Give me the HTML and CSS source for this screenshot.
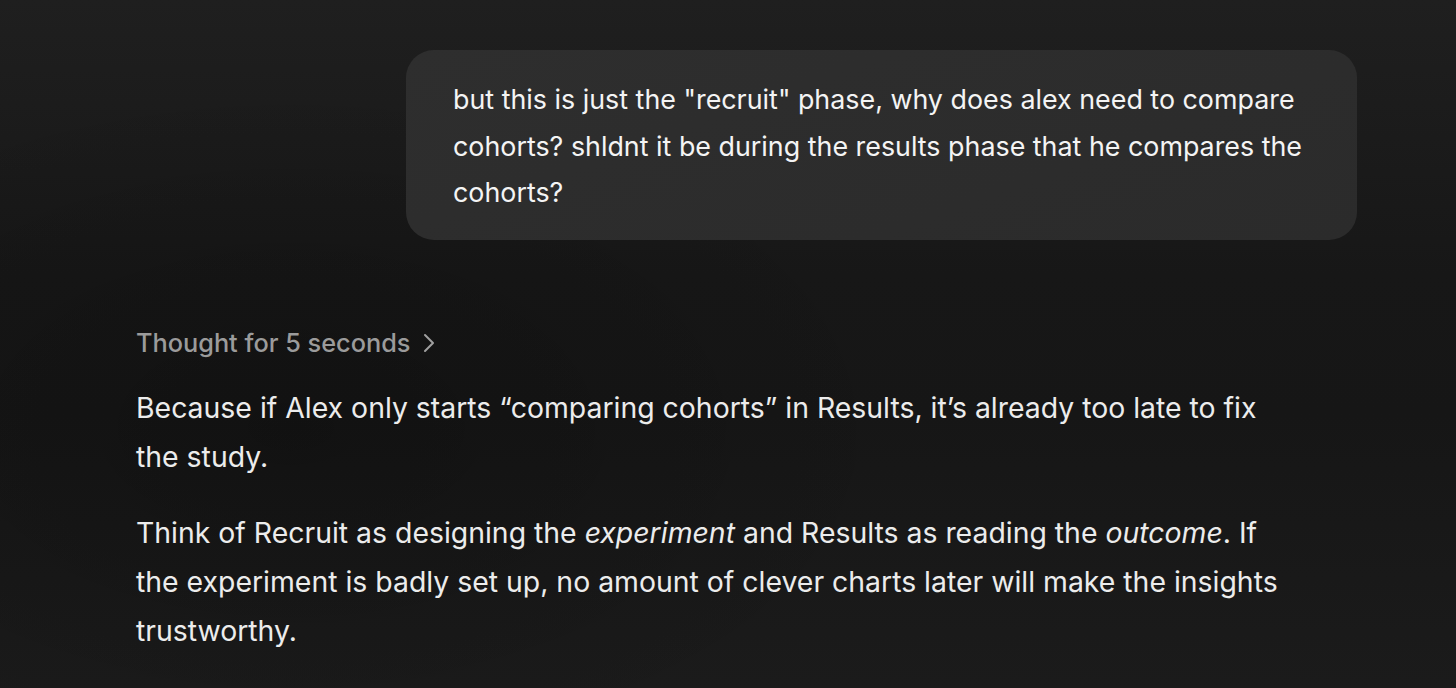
FILE: index.html
```html
<!DOCTYPE html>
<html lang="en">
<head>
<meta charset="utf-8">
<link rel="stylesheet" href="styles.css">
<title>Chat</title>
</head>
<body>
<main class="thread">
  <div class="user-row">
    <div class="bubble">but this is just the "recruit" phase, why does alex need to compare cohorts? shldnt it be during the results phase that he compares the cohorts?</div>
  </div>
  <div class="assistant">
    <div class="thought">Thought for 5 seconds
      <svg class="chev" width="14" height="22" viewBox="0 0 14 22"><path d="M3 3 L11 11 L3 19" fill="none" stroke="currentColor" stroke-width="2" stroke-linecap="round" stroke-linejoin="round"/></svg>
    </div>
    <p>Because if Alex only starts “comparing cohorts” in Results, it’s already too late to fix the study.</p>
    <p>Think of Recruit as designing the <em>experiment</em> and Results as reading the <em>outcome</em>. If the experiment is badly set up, no amount of clever charts later will make the insights trustworthy.</p>
  </div>
</main>
</body>
</html>
```

FILE: styles.css
```css
html, body {
  margin: 0;
  height: 100%;
}
body {
  background:
    radial-gradient(ellipse 900px 500px at 20% 62%, rgba(0, 0, 0, 0.22), rgba(0, 0, 0, 0) 70%),
    linear-gradient(180deg, #1f1f1f 0%, #171717 40%, #161616 60%, #1b1b1b 100%);
  font-family: Inter, "Noto Sans", sans-serif;
  color: #ececec;
  overflow: hidden;
}
.thread {
  width: 1221px;
  margin-left: 136px;
  padding-top: 50px;
  display: flex;
  flex-direction: column;
}
.user-row {
  display: flex;
  justify-content: flex-end;
}
.bubble {
  width: 951px;
  box-sizing: border-box;
  padding: 26px 47px 24.5px 47px;
  border-radius: 28px;
  background: linear-gradient(160deg, #2e2e2e 0%, #2b2b2b 100%);
  color: #f4f4f4;
  font-size: 26.85px;
  line-height: 46.5px;
}
.assistant {
  width: 1150px;
  margin-top: 85px;
}
.thought {
  display: flex;
  align-items: center;
  gap: 12px;
  color: #9b9b9b;
  font-size: 25.3px;
  font-weight: 500;
  line-height: 36px;
}
.chev {
  color: #a0a0a0;
}
.assistant p {
  margin: 0;
  font-size: 28.4px;
  line-height: 49px;
}
.thought + p {
  margin-top: 22px;
}
.assistant p + p {
  margin-top: 27px;
}
```
